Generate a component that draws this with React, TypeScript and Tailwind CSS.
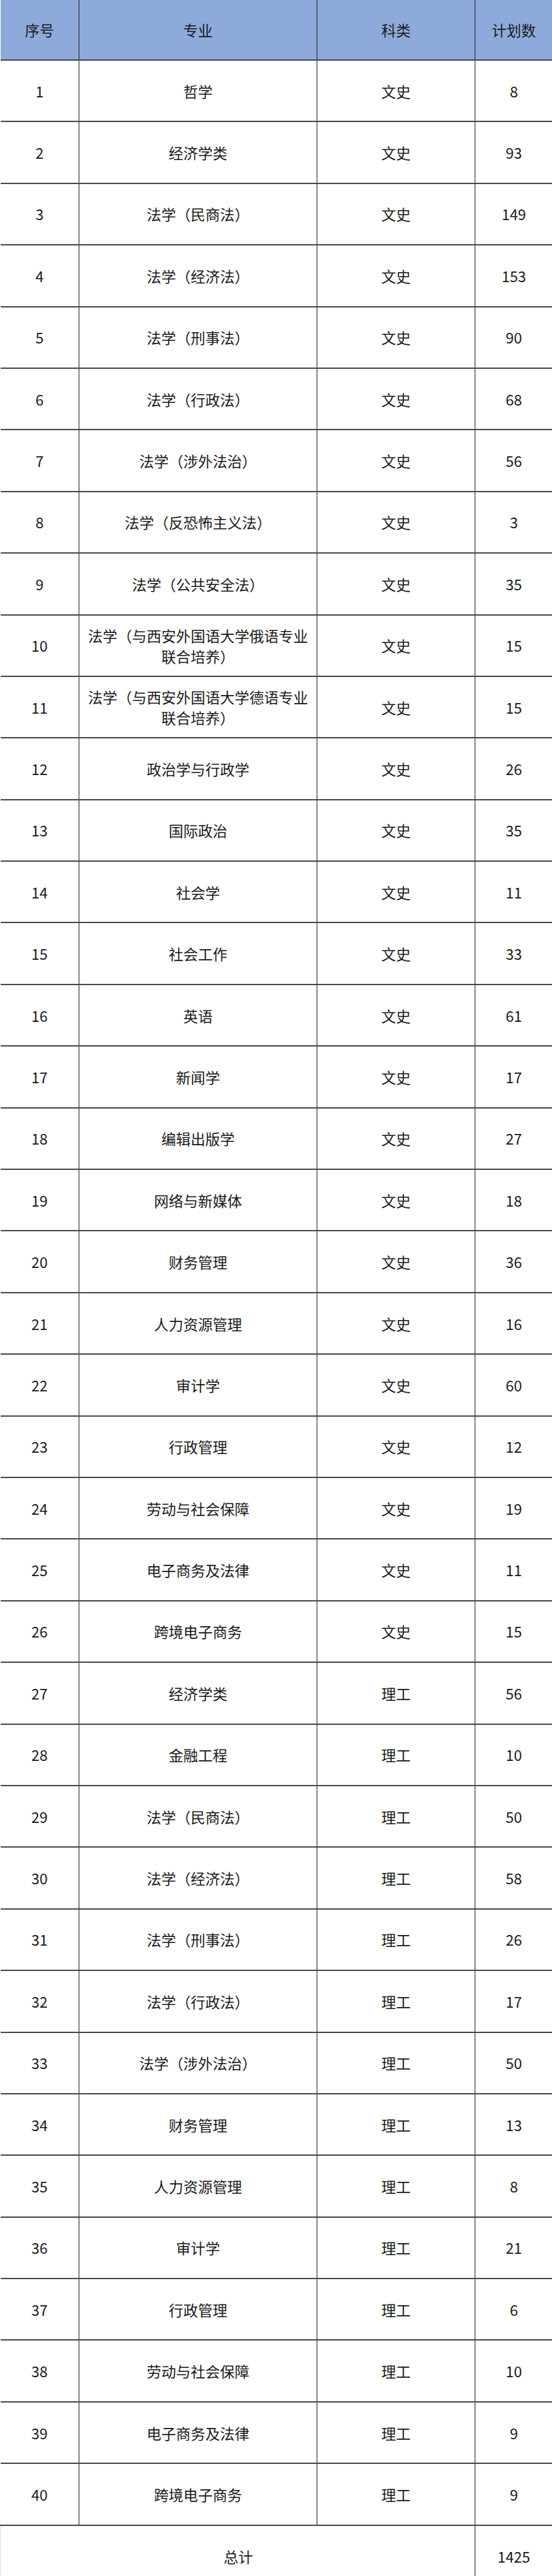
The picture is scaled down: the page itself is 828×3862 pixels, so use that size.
import React from "react";

type Row = [number, string, string, number];

const rows: Row[] = [
  [1, "哲学", "文史", 8],
  [2, "经济学类", "文史", 93],
  [3, "法学（民商法）", "文史", 149],
  [4, "法学（经济法）", "文史", 153],
  [5, "法学（刑事法）", "文史", 90],
  [6, "法学（行政法）", "文史", 68],
  [7, "法学（涉外法治）", "文史", 56],
  [8, "法学（反恐怖主义法）", "文史", 3],
  [9, "法学（公共安全法）", "文史", 35],
  [10, "法学（与西安外国语大学俄语专业联合培养）", "文史", 15],
  [11, "法学（与西安外国语大学德语专业联合培养）", "文史", 15],
  [12, "政治学与行政学", "文史", 26],
  [13, "国际政治", "文史", 35],
  [14, "社会学", "文史", 11],
  [15, "社会工作", "文史", 33],
  [16, "英语", "文史", 61],
  [17, "新闻学", "文史", 17],
  [18, "编辑出版学", "文史", 27],
  [19, "网络与新媒体", "文史", 18],
  [20, "财务管理", "文史", 36],
  [21, "人力资源管理", "文史", 16],
  [22, "审计学", "文史", 60],
  [23, "行政管理", "文史", 12],
  [24, "劳动与社会保障", "文史", 19],
  [25, "电子商务及法律", "文史", 11],
  [26, "跨境电子商务", "文史", 15],
  [27, "经济学类", "理工", 56],
  [28, "金融工程", "理工", 10],
  [29, "法学（民商法）", "理工", 50],
  [30, "法学（经济法）", "理工", 58],
  [31, "法学（刑事法）", "理工", 26],
  [32, "法学（行政法）", "理工", 17],
  [33, "法学（涉外法治）", "理工", 50],
  [34, "财务管理", "理工", 13],
  [35, "人力资源管理", "理工", 8],
  [36, "审计学", "理工", 21],
  [37, "行政管理", "理工", 6],
  [38, "劳动与社会保障", "理工", 10],
  [39, "电子商务及法律", "理工", 9],
  [40, "跨境电子商务", "理工", 9],
];

const font = {
  fontFamily: '"Noto Sans CJK SC", "Noto Sans", sans-serif',
};

export default function App() {
  return (
    <div className="w-[828px] h-[3862px] overflow-hidden bg-white text-[#1a1a1a]" style={font}>
      <table className="w-[828px] table-fixed border-collapse text-[22px] leading-[31px]">
        <colgroup>
          <col className="w-[118px]" />
          <col className="w-[357px]" />
          <col className="w-[237px]" />
          <col className="w-[116px]" />
        </colgroup>
        <thead>
          <tr className="h-[90px] bg-[#8eaadb] border-b-2 border-[#4a4a4a]">
            <th className="font-normal text-center border-r border-[#222]">序号</th>
            <th className="font-normal text-center border-r border-[#222]">专业</th>
            <th className="font-normal text-center border-r border-[#222]">科类</th>
            <th className="font-normal text-center">计划数</th>
          </tr>
        </thead>
        <tbody>
          {rows.map(([no, major, kind, plan]) => (
            <tr key={no} className="h-[92.4px] border-b-2 border-[#4a4a4a]">
              <td className="text-center border-r border-[#222]">{no}</td>
              <td className="text-center px-[10px] border-r border-[#222]">{major}</td>
              <td className="text-center border-r border-[#222]">{kind}</td>
              <td className="text-center">{plan}</td>
            </tr>
          ))}
          <tr className="h-[92px]">
            <td colSpan={3} className="text-center border-r border-l border-r-[#222] border-l-[#dcdcdc] pl-[2px]">
              总计
            </td>
            <td className="text-center">1425</td>
          </tr>
        </tbody>
      </table>
    </div>
  );
}
